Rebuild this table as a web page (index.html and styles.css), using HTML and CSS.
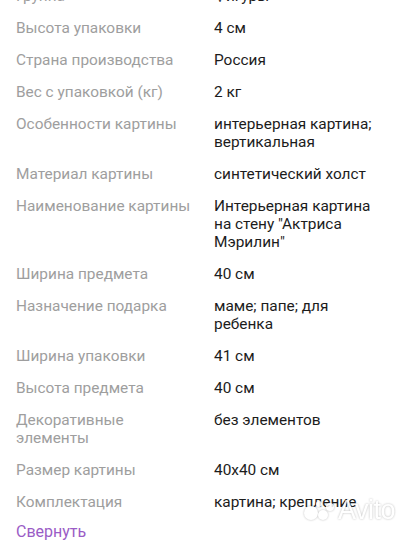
FILE: index.html
```html
<!DOCTYPE html>
<html lang="ru">
<head>
<meta charset="utf-8">
<link rel="stylesheet" href="styles.css">
</head>
<body>
<div class="specs">
  <div class="row"><div class="label">Группа</div><div class="value">Фигуры</div></div>
  <div class="row"><div class="label">Высота упаковки</div><div class="value">4 см</div></div>
  <div class="row"><div class="label">Страна производства</div><div class="value">Россия</div></div>
  <div class="row"><div class="label">Вес с упаковкой (кг)</div><div class="value">2 кг</div></div>
  <div class="row"><div class="label">Особенности картины</div><div class="value">интерьерная картина; вертикальная</div></div>
  <div class="row"><div class="label">Материал картины</div><div class="value">синтетический холст</div></div>
  <div class="row"><div class="label">Наименование картины</div><div class="value">Интерьерная картина на стену "Актриса Мэрилин"</div></div>
  <div class="row"><div class="label">Ширина предмета</div><div class="value">40 см</div></div>
  <div class="row"><div class="label">Назначение подарка</div><div class="value">маме; папе; для ребенка</div></div>
  <div class="row"><div class="label">Ширина упаковки</div><div class="value">41 см</div></div>
  <div class="row"><div class="label">Высота предмета</div><div class="value">40 см</div></div>
  <div class="row"><div class="label">Декоративные элементы</div><div class="value">без элементов</div></div>
  <div class="row"><div class="label">Размер картины</div><div class="value">40x40 см</div></div>
  <div class="row"><div class="label">Комплектация</div><div class="value">картина; крепление</div></div>
  <div class="toggle">Свернуть</div>
</div>
<div class="watermark">
  <svg class="wm-dots" width="34" height="22" viewBox="0 0 34 22">
    <circle cx="8" cy="14" r="7"/>
    <circle cx="20" cy="16" r="5"/>
    <circle cx="27" cy="8" r="4"/>
    <circle cx="16" cy="5" r="3"/>
  </svg>
  <span class="wm-text">Avito</span>
</div>
</body>
</html>
```
FILE: styles.css
```css
html, body {
  margin: 0;
  padding: 0;
  background: #ffffff;
}
body {
  width: 404px;
  height: 540px;
  overflow: hidden;
  position: relative;
  font-family: Roboto, "Noto Sans", sans-serif;
  font-size: 15.4px;
  line-height: 18px;
}
.specs {
  display: flex;
  flex-direction: column;
  gap: 14px;
  padding: 0 28px 0 16px;
  margin-top: -13px;
}
.row {
  display: grid;
  grid-template-columns: 178px 1fr;
  column-gap: 20px;
}
.label {
  color: #9e9e9e;
}
.value {
  color: #1c1c1c;
}
.toggle {
  color: #9a5cc6;
  font-size: 16px;
  margin-top: -2px;
}
.watermark {
  position: absolute;
  left: 303px;
  top: 496px;
  display: flex;
  align-items: center;
  gap: 1px;
  filter: drop-shadow(0 0 1px rgba(0,0,0,0.3));
  opacity: 0.85;
}
.wm-dots circle {
  fill: #ffffff;
}
.wm-text {
  color: #ffffff;
  font-family: "Liberation Sans", Arial, sans-serif;
  font-size: 27px;
  line-height: 28px;
  letter-spacing: -0.5px;
}
```
